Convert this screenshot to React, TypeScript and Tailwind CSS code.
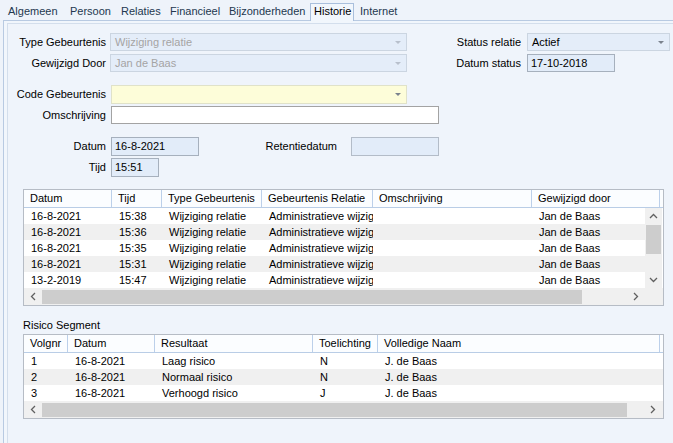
import React from "react";

function Combo({ className, text, tone }: { className: string; text: string; tone: "disabled" | "normal" | "yellow" }) {
  const base = "h-full border flex items-center justify-between pl-[4px] pr-[5px] whitespace-nowrap overflow-hidden";
  const toneCls =
    tone === "disabled"
      ? "bg-[#e4edf9] border-[#cbd5e1] text-[#a4a4a4]"
      : tone === "normal"
      ? "bg-[#e4edf9] border-[#cbd5e1] text-black"
      : "bg-[#fdfdd9] border-[#e0e2c9] text-black";
  const arrow = tone === "disabled" ? "border-t-[#b8c0cc]" : "border-t-[#7a828d]";
  return (
    <div className={`${base} ${toneCls} ${className}`}>
      <span>{text}</span>
      <span className={`w-0 h-0 border-l-[3px] border-r-[3px] border-t-[3px] border-l-transparent border-r-transparent ${arrow}`} />
    </div>
  );
}

const ChevUp = () => (
  <svg width="9" height="6" viewBox="0 0 9 6">
    <polyline points="1,5 4.5,1.5 8,5" fill="none" stroke="#606060" strokeWidth="1.3" />
  </svg>
);
const ChevDown = () => (
  <svg width="9" height="6" viewBox="0 0 9 6">
    <polyline points="1,1 4.5,4.5 8,1" fill="none" stroke="#606060" strokeWidth="1.3" />
  </svg>
);
const ChevLeft = () => (
  <svg width="6" height="9" viewBox="0 0 6 9">
    <polyline points="5,1 1.5,4.5 5,8" fill="none" stroke="#606060" strokeWidth="1.3" />
  </svg>
);
const ChevRight = () => (
  <svg width="6" height="9" viewBox="0 0 6 9">
    <polyline points="1,1 4.5,4.5 1,8" fill="none" stroke="#606060" strokeWidth="1.3" />
  </svg>
);

const t1Cols = [88, 50, 100, 111, 159, 128];
const t1Head = ["Datum", "Tijd", "Type Gebeurtenis", "Gebeurtenis Relatie", "Omschrijving", "Gewijzigd door"];
const t1Rows = [
  ["16-8-2021", "15:38", "Wijziging relatie", "Administratieve wijziging", "", "Jan de Baas"],
  ["16-8-2021", "15:36", "Wijziging relatie", "Administratieve wijziging", "", "Jan de Baas"],
  ["16-8-2021", "15:35", "Wijziging relatie", "Administratieve wijziging", "", "Jan de Baas"],
  ["16-8-2021", "15:31", "Wijziging relatie", "Administratieve wijziging", "", "Jan de Baas"],
  ["13-2-2019", "15:47", "Wijziging relatie", "Administratieve wijziging", "", "Jan de Baas"],
];

const t2Cols = [44, 87, 158, 65, 282];
const t2Head = ["Volgnr", "Datum", "Resultaat", "Toelichting", "Volledige Naam"];
const t2Rows = [
  ["1", "16-8-2021", "Laag risico", "N", "J. de Baas"],
  ["2", "16-8-2021", "Normaal risico", "N", "J. de Baas"],
  ["3", "16-8-2021", "Verhoogd risico", "J", "J. de Baas"],
];

function Header({ cols, head }: { cols: number[]; head: string[] }) {
  return (
    <div className="flex h-[18px] shrink-0 bg-[#fbfdff] border-b border-[#b9cde6]">
      {head.map((h, i) => (
        <div
          key={i}
          className="h-full border-r border-[#bcd0ea] pl-[6px] flex items-center whitespace-nowrap overflow-hidden shrink-0"
          style={{ width: cols[i] }}
        >
          {h}
        </div>
      ))}
    </div>
  );
}

function Row({ cols, cells, odd }: { cols: number[]; cells: string[]; odd: boolean }) {
  return (
    <div className={`flex h-[16px] shrink-0 ${odd ? "bg-[#f0f0f0]" : "bg-white"}`}>
      {cells.map((c, i) => (
        <div
          key={i}
          className="h-full pl-[7px] flex items-center whitespace-nowrap overflow-hidden shrink-0"
          style={{ width: cols[i] }}
        >
          {c}
        </div>
      ))}
    </div>
  );
}

export default function App() {
  return (
    <div className="font-['Liberation_Sans',Arial,sans-serif] text-[11px] text-black w-[673px] h-[443px] bg-[#eef3fa] overflow-hidden flex flex-col">
      {/* Tabs */}
      <div className="h-[20px] shrink-0 flex items-end pl-[4px] relative z-10 text-[#23384f]">
        <div className="w-[62px] h-[17px] leading-[17px] pl-[4px]">Algemeen</div>
        <div className="w-[51px] h-[17px] leading-[17px] pl-[4px]">Persoon</div>
        <div className="w-[49px] h-[17px] leading-[17px] pl-[4px]">Relaties</div>
        <div className="w-[59px] h-[17px] leading-[17px] pl-[4px]">Financieel</div>
        <div className="w-[85px] h-[17px] leading-[17px] pl-[4px]">Bijzonderheden</div>
        <div className="w-[44px] h-[18px] -mb-[1px] leading-[14px] pl-[3px] border border-b-0 border-[#a9bfdc] bg-[#f1f6fc] text-black">
          Historie
        </div>
        <div className="w-[44px] h-[17px] leading-[17px] pl-[6px]">Internet</div>
      </div>

      {/* Panel */}
      <div className="flex-1 ml-[3px] border-t border-l border-[#b8cae2] bg-[#f1f6fc] flex flex-col">
        <div className="flex-1 mt-[2px] ml-[3px] border-t border-l border-[#d3deec] bg-[#eff4fb] flex flex-col">
          {/* Row 1 */}
          <div className="flex items-center mt-[9px] h-[18px]">
            <div className="w-[98px] text-right">Type Gebeurtenis</div>
            <Combo className="ml-[4px] w-[297px]" text="Wijziging relatie" tone="disabled" />
            <div className="w-[110px] ml-[4px] text-right">Status relatie</div>
            <Combo className="ml-[6px] w-[143px]" text="Actief" tone="normal" />
          </div>
          {/* Row 2 */}
          <div className="flex items-center mt-[3px] h-[18px]">
            <div className="w-[98px] text-right">Gewijzigd Door</div>
            <Combo className="ml-[4px] w-[297px]" text="Jan de Baas" tone="disabled" />
            <div className="w-[110px] ml-[4px] text-right">Datum status</div>
            <div className="ml-[6px] w-[88px] h-full border border-[#a6b0bd] bg-[#e2ecf9] pl-[3px] flex items-center">
              17-10-2018
            </div>
          </div>
          {/* Code Gebeurtenis */}
          <div className="flex items-center mt-[13px] h-[19px]">
            <div className="w-[98px] text-right">Code Gebeurtenis</div>
            <Combo className="ml-[5px] w-[296px]" text="" tone="yellow" />
          </div>
          {/* Omschrijving */}
          <div className="flex items-center mt-[2px] h-[18px]">
            <div className="w-[98px] text-right">Omschrijving</div>
            <div className="ml-[5px] w-[328px] h-full border border-[#a3a3a3] bg-white" />
          </div>
          {/* Datum */}
          <div className="flex items-center mt-[13px] h-[19px]">
            <div className="w-[98px] text-right">Datum</div>
            <div className="ml-[5px] w-[88px] h-full border border-[#a6b0bd] bg-[#e2ecf9] pl-[3px] flex items-center">
              16-8-2021
            </div>
            <div className="w-[138px] text-right">Retentiedatum</div>
            <div className="ml-[14px] w-[88px] h-full border border-[#b3bcc8] bg-[#e2ecf9]" />
          </div>
          {/* Tijd */}
          <div className="flex items-center mt-[2px] h-[19px]">
            <div className="w-[98px] text-right">Tijd</div>
            <div className="ml-[5px] w-[48px] h-full border border-[#a6b0bd] bg-[#e2ecf9] pl-[3px] flex items-center">
              15:51
            </div>
          </div>

          {/* Table 1 */}
          <div className="ml-[15px] mt-[12px] w-[641px] h-[117px] shrink-0 border border-[#b6bcc5] bg-white flex flex-col overflow-hidden">
            <Header cols={t1Cols} head={t1Head} />
            <div className="flex h-[80px] shrink-0">
              <div className="w-[621px] overflow-hidden flex flex-col">
                {t1Rows.map((r, i) => (
                  <Row key={i} cols={t1Cols} cells={r} odd={i % 2 === 1} />
                ))}
              </div>
              <div className="w-[17px] h-full bg-[#f0f0f0] flex flex-col items-center">
                <div className="h-[16px] flex items-center justify-center">
                  <ChevUp />
                </div>
                <div className="w-[15px] h-[29px] mt-[1px] bg-[#cdcdcd]" />
                <div className="flex-1" />
                <div className="h-[16px] flex items-center justify-center">
                  <ChevDown />
                </div>
              </div>
            </div>
            <div className="flex h-[17px] shrink-0 bg-[#f0f0f0]">
              <div className="w-[621px] flex items-center">
                <div className="w-[18px] flex justify-center">
                  <ChevLeft />
                </div>
                <div className="w-[540px] h-[14px] bg-[#cdcdcd]" />
                <div className="flex-1" />
                <div className="w-[18px] flex justify-center">
                  <ChevRight />
                </div>
              </div>
              <div className="w-[17px]" />
            </div>
          </div>

          {/* Risico Segment */}
          <div className="ml-[15px] mt-[13px] h-[13px] leading-[13px]">Risico Segment</div>

          {/* Table 2 */}
          <div className="ml-[15px] mt-[2px] w-[641px] h-[85px] shrink-0 border border-[#b6bcc5] bg-white flex flex-col overflow-hidden">
            <Header cols={t2Cols} head={t2Head} />
            <div className="flex flex-col h-[48px] shrink-0">
              {t2Rows.map((r, i) => (
                <Row key={i} cols={t2Cols} cells={r} odd={i % 2 === 1} />
              ))}
            </div>
            <div className="flex items-center h-[17px] shrink-0 bg-[#f0f0f0]">
              <div className="w-[18px] flex justify-center">
                <ChevLeft />
              </div>
              <div className="w-[585px] h-[14px] bg-[#cdcdcd]" />
              <div className="flex-1" />
              <div className="w-[20px] flex justify-center">
                <ChevRight />
              </div>
            </div>
          </div>
        </div>
      </div>
    </div>
  );
}
